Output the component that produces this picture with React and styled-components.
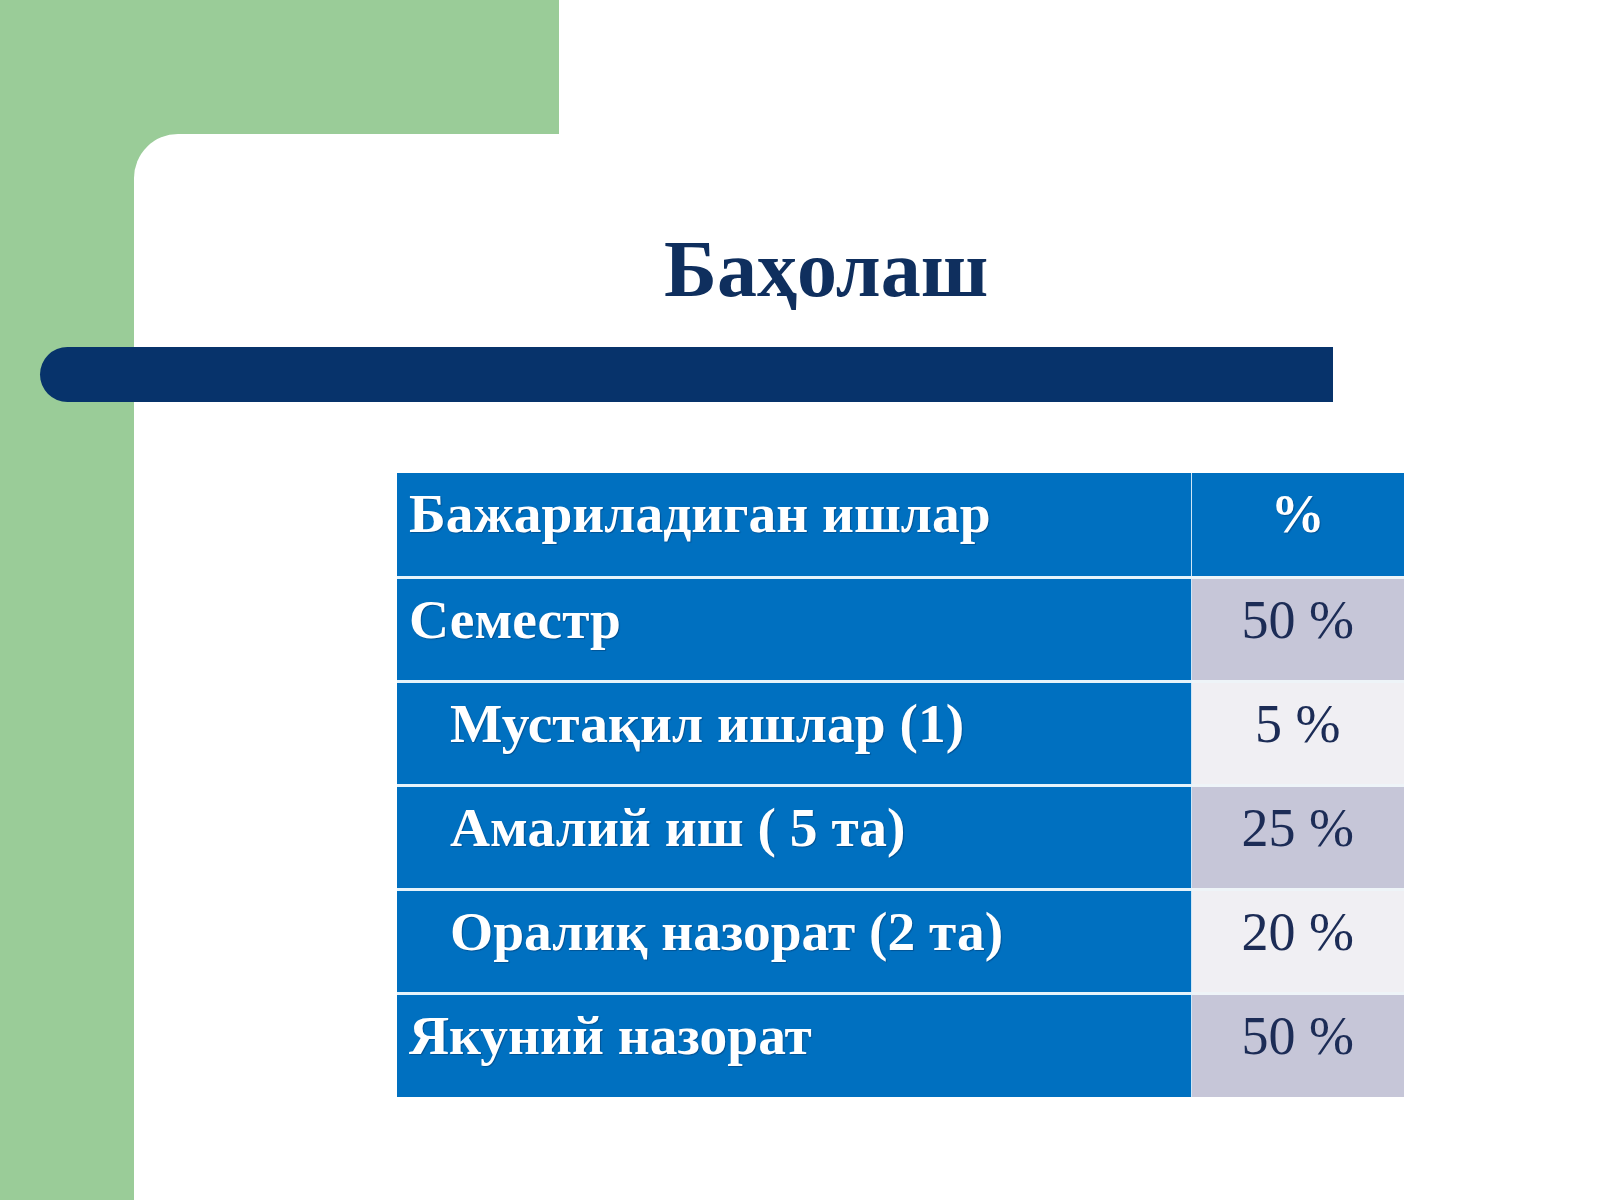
import React from 'react';
import styled, {createGlobalStyle} from "styled-components";

const GlobalStyle = createGlobalStyle`
  html, body {
    margin: 0;
    padding: 0;
    background: #ffffff;
  }
  body {
    font-family: "Liberation Serif", "DejaVu Serif", serif;
  }
`

// green frame: top strip + left column, extended a bit so the card's rounded corner shows green
const Slide = styled.div`
  width: 1600px;
  height: 1200px;
  box-sizing: border-box;
  padding: 134px 0 0 134px;
  display: flex;
  background: linear-gradient(#9acc98, #9acc98) 0 0 / 559px 200px no-repeat,
  linear-gradient(#9acc98, #9acc98) 0 0 / 200px 100% no-repeat,
  #ffffff;
  overflow: hidden;
`

const Card = styled.div`
  flex: 1;
  background: #ffffff;
  border-top-left-radius: 44px;
  padding-top: 95px;
  display: flex;
  flex-direction: column;
`

const Title = styled.h1`
  margin: 0 0 0 530px;
  font-size: 80px;
  line-height: 80px;
  font-weight: bold;
  color: #0f2f5e;
`

const Bar = styled.div`
  margin: 38px 0 0 -94px;
  width: 1293px;
  height: 55px;
  background: #07336b;
  border-radius: 28px 0 0 28px;
`

const Table = styled.table`
  margin: 71px 0 0 263px;
  width: 1007px;
  border-collapse: collapse;
  table-layout: fixed;
`

const Row = styled.tr`
  height: 104px;
`

const Cell = styled.td`
  box-sizing: border-box;
  vertical-align: top;
  padding: 13px 0 0 ${p => p.$indent ? 53 : 12}px;
  font-size: 55.5px;
  line-height: 56px;
  font-weight: bold;
  color: #ffffff;
  background: #0070c0;
  border-top: 3px solid #e6f3fb;
  border-right: 1px solid #cfe6f6;
  white-space: pre;
  text-shadow: 1px 1px 1px rgba(0, 30, 70, 0.35);

  tr:first-child > & {
    border-top: none;
  }
`

const ValueCell = styled.td`
  box-sizing: border-box;
  vertical-align: top;
  text-align: center;
  padding-top: 14px;
  font-size: 54px;
  line-height: 54px;
  font-weight: ${p => p.$head ? 'bold' : 'normal'};
  color: ${p => p.$head ? '#ffffff' : '#1c2c56'};
  background: ${p => p.$head ? '#0070c0' : p.$shade ? '#c6c6d8' : '#f0eff3'};
  border-top: 3px solid #eef4f8;
  ${p => p.$head && 'text-shadow: 1px 1px 1px rgba(0, 30, 70, 0.35);'}

  tr:first-child > & {
    border-top: none;
  }
`

const rows = [
    {name: 'Семестр', value: '50 %', shade: true},
    {name: 'Мустақил ишлар (1)', value: '5 %', indent: true},
    {name: 'Амалий иш ( 5 та)', value: '25 %', indent: true, shade: true},
    {name: 'Оралиқ назорат (2 та)', value: '20 %', indent: true},
    {name: 'Якуний назорат', value: '50 %', shade: true},
]

const App = () => {
    return (
        <>
            <GlobalStyle/>
            <Slide>
                <Card>
                    <Title>Баҳолаш</Title>
                    <Bar/>
                    <Table>
                        <colgroup>
                            <col style={{width: 794}}/>
                            <col style={{width: 213}}/>
                        </colgroup>
                        <tbody>
                        <Row>
                            <Cell>Бажариладиган ишлар</Cell>
                            <ValueCell $head>%</ValueCell>
                        </Row>
                        {rows.map((r) => (
                            <Row key={r.name}>
                                <Cell $indent={r.indent}>{r.name}</Cell>
                                <ValueCell $shade={r.shade}>{r.value}</ValueCell>
                            </Row>
                        ))}
                        </tbody>
                    </Table>
                </Card>
            </Slide>
        </>
    )
}

export default App;
